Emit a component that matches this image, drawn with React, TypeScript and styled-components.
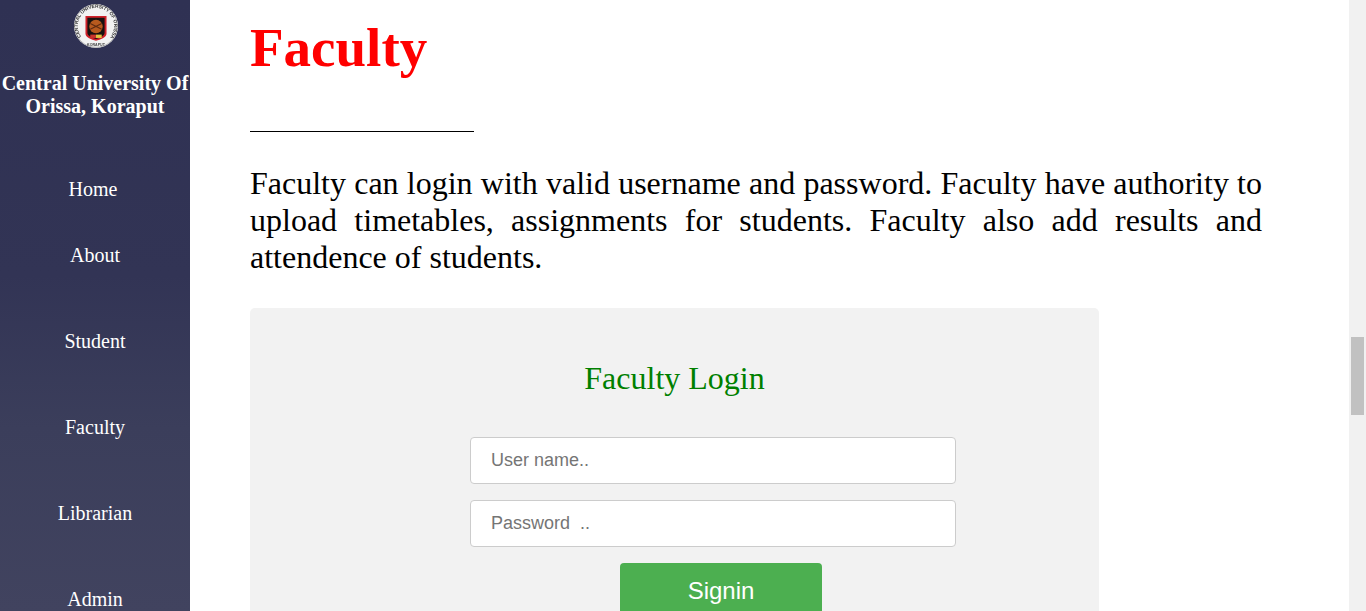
import { createGlobalStyle, styled } from "styled-components";

const NAV_ITEMS = [
  { label: "Home", gap: 0, shift: -2 },
  { label: "About", gap: 42, shift: 0 },
  { label: "Student", gap: 62, shift: 0 },
  { label: "Faculty", gap: 62, shift: 0 },
  { label: "Librarian", gap: 62, shift: 0 },
  { label: "Admin", gap: 62, shift: 0 },
];

const GlobalStyle = createGlobalStyle`
  html, body {
    margin: 0;
    height: 100%;
    overflow: hidden;
    background: #fff;
  }
  #root {
    height: 100%;
  }
`;

const Page = styled.div`
  display: flex;
  height: 611px;
  overflow: hidden;
  font-family: "Liberation Serif", "Times New Roman", serif;
`;

const Sidebar = styled.aside`
  width: 190px;
  flex-shrink: 0;
  display: flex;
  flex-direction: column;
  align-items: center;
  color: #fff;
  background: linear-gradient(180deg, #2f3153 0%, #323455 45%, #3b3e5b 70%, #41435f 100%);
`;

const Seal = styled.svg`
  width: 46px;
  height: 46px;
  margin-top: 4px;
  margin-left: 1px;
  filter: blur(0.35px);
`;

const Brand = styled.h2`
  margin: 24px 0 0;
  width: 190px;
  font-size: 20px;
  line-height: 23px;
  font-weight: bold;
  text-align: center;
  white-space: nowrap;
`;

const Nav = styled.nav`
  display: flex;
  flex-direction: column;
  align-items: center;
  margin-top: 59px;
  width: 100%;
`;

const NavLink = styled.a<{ $gap: number; $shift: number }>`
  margin-top: ${({ $gap }) => $gap}px;
  transform: translateX(${({ $shift }) => $shift}px);
  font-size: 20px;
  line-height: 24px;
  color: #fff;
`;

const Main = styled.main`
  flex: 1;
  min-width: 0;
  padding: 0 87px 0 60px;
`;

const Heading = styled.h1`
  margin: 16px 0 0;
  font-size: 55px;
  line-height: 64px;
  font-weight: bold;
  color: #f00;
`;

const Rule = styled.hr`
  width: 224px;
  height: 1px;
  margin: 51px 0 0;
  border: 0;
  background: #000;
`;

const Intro = styled.p`
  margin: 33px 0 0;
  font-size: 32px;
  line-height: 37px;
  text-align: justify;
  color: #000;
`;

const LoginCard = styled.section`
  width: 849px;
  height: 340px;
  margin-top: 32px;
  padding-top: 52px;
  box-sizing: border-box;
  background: #f2f2f2;
  border-radius: 5px;
`;

const CardTitle = styled.h3`
  margin: 0;
  font-size: 32px;
  line-height: 37px;
  font-weight: normal;
  text-align: center;
  color: #008000;
`;

const LoginForm = styled.form`
  display: flex;
  flex-direction: column;
  align-items: center;
  gap: 16px;
  width: 486px;
  margin: 40px 0 0 220px;
`;

const Field = styled.input`
  width: 100%;
  height: 47px;
  box-sizing: border-box;
  padding: 0 20px;
  font-family: "Liberation Sans", Arial, sans-serif;
  font-size: 18px;
  background: #fff;
  border: 1px solid #ccc;
  border-radius: 4px;
  white-space: pre;

  &::placeholder {
    color: #757575;
    opacity: 1;
  }
`;

const SubmitButton = styled.button`
  width: 202px;
  height: 56px;
  margin-left: 16px;
  border: 0;
  border-radius: 4px;
  background: #4caf50;
  color: #fff;
  font-family: "Liberation Sans", Arial, sans-serif;
  font-size: 24px;
`;

const ScrollTrack = styled.div`
  width: 17px;
  flex-shrink: 0;
  display: flex;
  justify-content: center;
  background: #f1f1f1;
`;

const ScrollThumb = styled.div`
  width: 13px;
  height: 78px;
  margin-top: 337px;
  background: #c1c1c1;
`;

function UniversitySeal() {
  return (
    <Seal viewBox="0 0 46 46" aria-hidden="true">
      <defs>
        <path id="seal-arc" d="M7.6 34.2 A19 19 0 1 1 38.4 34.2" />
      </defs>
      <circle cx="23" cy="23" r="23" fill="#f2f2f2" />
      <circle cx="23" cy="23" r="22.3" fill="none" stroke="#a5a5a5" strokeWidth="0.8" />
      <text fontFamily="Liberation Sans, sans-serif" fontSize="5" fontWeight="bold" fill="#333">
        <textPath href="#seal-arc" textLength="84" lengthAdjust="spacing">
          CENTRAL UNIVERSITY OF ORISSA
        </textPath>
      </text>
      <text x="23" y="43.8" fontFamily="Liberation Sans, sans-serif" fontSize="3.8" fontWeight="bold" fill="#444" textAnchor="middle">
        KORAPUT
      </text>
      <path d="M12 12.5 H34 V31 C34 35 27.5 37 23 38.5 C18.5 37 12 35 12 31 Z" fill="#cf2029" />
      <path d="M14 14.5 H32 V30 C32 33.5 27 35.2 23 36.5 C19 35.2 14 33.5 14 30 Z" fill="#17120f" />
      <circle cx="23" cy="23.5" r="7" fill="#b85a1e" />
      <path d="M17 26.5 L29 20.5 M17 20.5 L29 26.5" stroke="#5e2a10" strokeWidth="1.2" />
      <rect x="17" y="32" width="6" height="3.5" fill="#c9352c" />
      <rect x="23" y="32" width="6" height="3.5" fill="#e3c23f" />
    </Seal>
  );
}

export default function App() {
  return (
    <Page>
      <GlobalStyle />
      <Sidebar>
        <UniversitySeal />
        <Brand>
          Central University Of
          <br />
          Orissa, Koraput
        </Brand>
        <Nav>
          {NAV_ITEMS.map((item) => (
            <NavLink key={item.label} $gap={item.gap} $shift={item.shift}>
              {item.label}
            </NavLink>
          ))}
        </Nav>
      </Sidebar>
      <Main>
        <Heading>Faculty</Heading>
        <Rule />
        <Intro>
          Faculty can login with valid username and password. Faculty have authority to upload timetables, assignments
          for students. Faculty also add results and attendence of students.
        </Intro>
        <LoginCard>
          <CardTitle>Faculty Login</CardTitle>
          <LoginForm>
            <Field type="text" placeholder="User name.." />
            <Field type="password" placeholder="Password  .." />
            <SubmitButton type="button">Signin</SubmitButton>
          </LoginForm>
        </LoginCard>
      </Main>
      <ScrollTrack>
        <ScrollThumb />
      </ScrollTrack>
    </Page>
  );
}
